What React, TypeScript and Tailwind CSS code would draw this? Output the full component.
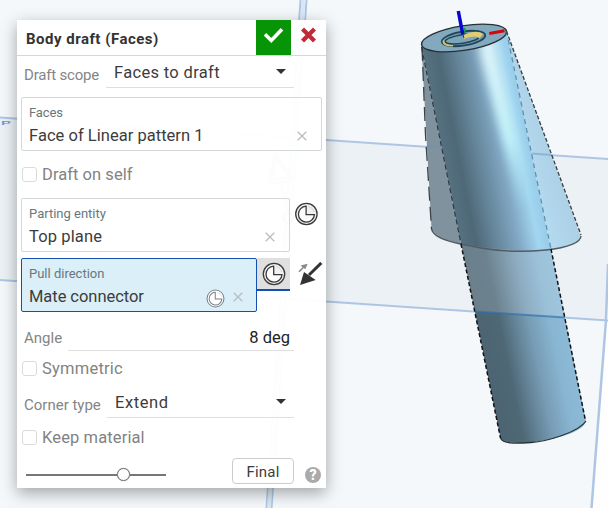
import React from "react";

function MateIcon({ className = "", light = false }: { className?: string; light?: boolean }) {
  const c = light ? "#7b8286" : "#3a3a3a";
  return (
    <svg viewBox="0 0 24 24" className={className} fill="none" stroke={c} strokeWidth={1.3}>
      <circle cx="12" cy="12" r="10.7" fill={light ? "#fff" : "#f1f1f1"} />
      <path d="M11.7 4.2A8 8 0 1 0 20 12.6H11.7Z" fill="#fff" fillOpacity={0.8} />
      <path d="M14.2 4.5A8 8 0 0 1 19.8 10" strokeWidth={0.7} stroke="#ccc" />
    </svg>
  );
}

function Clear({ className = "" }: { className?: string }) {
  return (
    <svg viewBox="0 0 10 10" className={"size-[10px] " + className} stroke="#b9bdbf" strokeWidth={1.3}>
      <path d="M.7.7 9.3 9.3M9.3.7.7 9.3" />
    </svg>
  );
}

function Caret() {
  return <span className="mr-2 h-0 w-0 border-x-[5px] border-t-[5px] border-x-transparent border-t-[#333]" />;
}

function Check({ label, className, tracking }: { label: string; className: string; tracking: string }) {
  return (
    <label className={"flex items-center pl-[5px] text-[#828282] " + className}>
      <span className="size-[15px] rounded-[3px] border border-[#d9dbdc] bg-white" />
      <span className={"ml-[5px] pt-px leading-5 " + tracking}>{label}</span>
    </label>
  );
}

function Scene() {
  return (
    <svg className="absolute inset-0" width="608" height="508" viewBox="0 0 608 508" fill="none">
      <defs>
        <linearGradient id="low" gradientUnits="userSpaceOnUse" x1="488" y1="380" x2="575" y2="362">
          <stop offset="0" stopColor="#4d6472" />
          <stop offset=".26" stopColor="#4e6876" />
          <stop offset=".58" stopColor="#779bb4" />
          <stop offset=".82" stopColor="#88b6d2" />
          <stop offset="1" stopColor="#8dbbd7" />
        </linearGradient>
        <linearGradient id="high" gradientUnits="userSpaceOnUse" x1="437" y1="127" x2="526" y2="109">
          <stop offset="0" stopColor="#567180" />
          <stop offset=".17" stopColor="#4e6877" />
          <stop offset=".4" stopColor="#67889d" />
          <stop offset=".62" stopColor="#80a6c2" />
          <stop offset=".84" stopColor="#a2d6f0" />
          <stop offset="1" stopColor="#94c9e8" />
        </linearGradient>
        <linearGradient id="shine" gradientUnits="userSpaceOnUse" x1="480" y1="45" x2="525" y2="235">
          <stop offset="0" stopColor="#dcf3fa" />
          <stop offset=".5" stopColor="#c4f4fb" />
          <stop offset=".9" stopColor="#a6ddf8" stopOpacity="0" />
        </linearGradient>
        <linearGradient id="wing" gradientUnits="userSpaceOnUse" x1="532" y1="180" x2="565" y2="170">
          <stop offset="0" stopColor="#b4daf0" />
          <stop offset="1" stopColor="#abcee2" />
        </linearGradient>
        <filter id="soft" x="-100%" y="-10%" width="300%" height="120%"><feGaussianBlur stdDeviation="5" /></filter>
        <clipPath id="upper"><path d="M421.5 46 461 244Q505 252 551 250L506.5 31Z" /></clipPath>
      </defs>
      <rect width="608" height="508" fill="#f4f8fb" />
      <path d="M0 117 608 159V265L606 320.5 0 279Z" fill="#ebf1f5" />
      <path d="M608 300 591 508H608Z" fill="#fefefe" />
      <g stroke="#aec6e4" strokeWidth="2">
        <path d="M0 117.5 326 140 608 159" />
        <path d="M0 280 326 301.5 608 320.5" />
        <path d="M608 264 606 320 591.5 508" strokeWidth="2.5" />
        <path d="M300.5 0 266.5 508M306.5 0 271.5 508" />
      </g>
      <path d="M303.5 0 269 508" stroke="#d8e6f5" strokeWidth="4" />
      <text transform="translate(1 125) scale(1.65 .62)" fill="#7898dd" className="font-['Liberation_Sans'] text-[9px] font-bold">P</text>
      <path d="M275 151 269 184 293 180ZM275 157 272 180 289 177ZM281 184 288 212" stroke="#aab4bd" strokeWidth="2" />
      <circle cx="288" cy="218" r="5" stroke="#87939d" strokeWidth="2.5" />

      <path d="M461 243 500.5 438Q509 447 546 440T586 421L551 249Z" fill="url(#low)" />
      <path d="M461 243 475.5 311.5 565 317.5 551 249Z" fill="#f0f5f8" fillOpacity=".19" />
      <path d="M475.5 311.5 565 317.5" stroke="#2e6eaa" strokeOpacity=".65" strokeWidth="2" />
      <path d="M421.5 46 431.5 229Q438 239 461 244Z" fill="#80929e" />
      <path d="M426.5 146 441 147" stroke="#6e91b2" strokeWidth="1.5" strokeOpacity=".6" />
      <path d="M506.5 31 581 237Q576 246 551 250Z" fill="url(#wing)" />
      <path d="M532 153.5 552 155" stroke="#8eb4da" strokeWidth="2" />
      <g clipPath="url(#upper)">
        <path d="M410 20H570V260H410Z" fill="url(#high)" />
        <path d="M479 30 492 30 532 205 520 205 480 55Z" fill="url(#shine)" filter="url(#soft)" />
      </g>
      <ellipse cx="464" cy="38" rx="43" ry="12.3" transform="rotate(-9 464 38)" fill="#83a9bf" stroke="#293034" strokeWidth="1.4" />
      <g transform="rotate(-9 463.5 38.5)">
        <ellipse cx="463.5" cy="38.5" rx="22" ry="7" fill="#729bb2" stroke="#234657" strokeWidth="1.8" />
        <path d="M444 37.5Q442 42 452 43.5" stroke="#dcc66c" strokeWidth="2.6" />
        <ellipse cx="462.5" cy="38.8" rx="17.5" ry="4.3" fill="#7ca6bc" stroke="#244456" strokeWidth="1.6" />
        <path d="M464 35Q478 31.5 483.5 37L479.5 41Q477 36.5 464 39Z" fill="#e2cc71" />
      </g>
      <path d="M462 35 465 28V33Z" stroke="#159943" strokeWidth="1.2" />
      <path d="M463 35 464 38" stroke="#293d48" />
      <path d="M458.3 11 462.8 34.5" stroke="#0707ce" strokeWidth="3.5" />
      <path d="M489.3 33.4 504.5 30.8" stroke="#d0080e" strokeWidth="3" />
      <path d="M431.5 229C434 240 461 244.5 481 248S523 252.3 546 250 581 242 581 236" stroke="#505b62" strokeWidth="1.4" />
      <path d="M500.5 438C503 444 515 443.5 531 442.5S579 432 586 421" stroke="#2b3438" strokeWidth="1.3" />
      <path d="M422 47 425.5 135 431.5 229" stroke="#39444a" strokeWidth="1.3" strokeDasharray="14 6" />
      <path d="M506.5 31 581 235" stroke="#333d43" strokeWidth="1.3" strokeDasharray="4 2" />
      <path d="M421.5 47 461 244" stroke="#29363e" strokeWidth="1.1" strokeDasharray="5 3" />
      <path d="M506.5 31 551 249" stroke="#37617e" strokeOpacity=".65" strokeWidth="1.2" strokeDasharray="5 4" />
      <path d="M461 244 500.5 438M551 249 585.5 421" stroke="#111" strokeWidth="1.5" strokeDasharray="4 2.5" />
    </svg>
  );
}

export default function App() {
  return (
    <main className="relative h-[508px] w-[608px] overflow-hidden pt-5 pl-[17px] font-[Roboto,sans-serif] text-[16.5px] text-[#3c3c3c]">
      <Scene />
      <section className="relative flex h-[468px] w-[309px] flex-col bg-white/96 shadow-[0_5px_15px_rgba(0,0,0,0.34)]">
        <header className="flex h-9 shrink-0 border-b border-[#d5d8d9] bg-white">
          <h1 className="grow pt-[9px] pl-[9px] text-[15px] leading-5 font-bold tracking-[0.5px] text-[#333]">Body draft (Faces)</h1>
          <button className="flex h-[35px] w-[35px] items-start justify-center bg-[#079407] pt-[7px]">
            <svg width="21" height="17" viewBox="0 0 21 17" fill="none" stroke="#fff" strokeWidth="3.6"><path d="M2 7.3 8.3 13.5 19 2.3" /></svg>
          </button>
          <button className="flex h-[35px] w-[35px] items-start pt-[7px] pl-[10px]">
            <svg width="15" height="16" viewBox="0 0 15 16" fill="none" stroke="#c02b38" strokeWidth="4.3"><path d="M1.5 2 13.5 14M13.5 2 1.5 14" /></svg>
          </button>
        </header>
        <div className="flex h-8 shrink-0 pl-[7px]">
          <span className="w-[82px] pt-[9px] text-[15px] leading-5 tracking-[-0.2px] text-[#858585]">Draft scope</span>
          <div className="flex w-[188px] items-center justify-between border-b border-[#dedfe0] pl-2"><span className="pt-0.5 leading-6 tracking-[0.33px]">Faces to draft</span><Caret /></div>
        </div>
        <div className="mt-[9px] ml-1 flex h-[54px] w-[301px] shrink-0 flex-col rounded-[2px] border border-[#d5d8d9] bg-white/40 pt-[5px] pl-[7px]">
          <span className="text-[13px] leading-5 tracking-[-0.15px] text-[#69767d]">Faces</span>
          <div className="flex h-[26px] items-center"><span className="grow leading-6 tracking-[0.03px]">Face of Linear pattern 1</span><Clear className="mr-[14px]" /></div>
        </div>
        <Check label="Draft on self" className="h-[47px] shrink-0" tracking="tracking-[0.05px]" />
        <div className="flex h-[54px] shrink-0 pl-1">
          <div className="flex w-[269px] flex-col rounded-[2px] border border-[#d5d8d9] pt-[5px] pl-[7px]">
            <span className="text-[13px] leading-5 text-[#69767d]">Parting entity</span>
            <div className="flex h-[26px] items-center"><span className="grow leading-6 tracking-[0.13px]">Top plane</span><Clear className="mr-[14px]" /></div>
          </div>
          <MateIcon className="mt-1 ml-[5px] size-6 -translate-x-[0.6px]" />
        </div>
        <div className="mt-1.5 flex h-[54px] shrink-0 pl-1">
          <div className="flex w-[236px] flex-col rounded-[2px] border border-[#1350b1] bg-[#daeff8] pt-[5px] pl-[7px]">
            <span className="text-[13px] leading-5 text-[#69767d]">Pull direction</span>
            <div className="flex h-[26px] items-center"><span className="grow leading-6 tracking-[-0.05px]">Mate connector</span><MateIcon light className="mr-2 size-[19px] translate-y-px" /><Clear className="mr-[13px]" /></div>
          </div>
          <div className="flex h-[33px] w-[33px] items-center justify-center border-b-2 border-[#1350b1] bg-[#e0e0e0]"><MateIcon className="size-6" /></div>
          <svg className="mt-1 ml-[8px]" width="25" height="25" viewBox="0 0 25 25">
            <path d="M23.3 .9 11 13" stroke="#333" strokeWidth="3" />
            <path d="M2 23 6 10 17.7 18Z" fill="#333" />
            <path d="M1 9.8 6 4.8" stroke="#888" strokeWidth="1.6" />
            <path d="M9.7 1.7 2.5 3.6 7.3 7.3Z" fill="#888" />
          </svg>
        </div>
        <div className="flex h-[39px] shrink-0 pl-[7px]">
          <span className="w-[44px] pt-4 text-[15px] leading-5 text-[#858585]">Angle</span>
          <div className="flex w-[226px] justify-end border-b border-[#dedfe0] pt-4 pr-1 leading-5 text-[#222]">8 deg</div>
        </div>
        <Check label="Symmetric" className="h-[35px] shrink-0" tracking="tracking-[0.22px]" />
        <div className="flex h-8 shrink-0 pl-[7px]">
          <span className="w-[83px] pt-[9px] text-[15px] leading-5 text-[#858585]">Corner type</span>
          <div className="flex w-[187px] items-center justify-between border-b border-[#dedfe0] pl-2"><span className="pt-0.5 leading-6 tracking-[0.6px]">Extend</span><Caret /></div>
        </div>
        <Check label="Keep material" className="h-[39px] shrink-0" tracking="tracking-[0.12px]" />
        <footer className="flex h-[31px] shrink-0 pl-[9px]">
          <div className="flex h-[35px] w-[140px] items-center">
            <span className="h-0.5 w-[91px] bg-[#777]" />
            <span className="size-[13px] rounded-full border border-[#777] bg-white shadow-[0_0_1px_#777]" />
            <span className="h-0.5 grow bg-[#777]" />
          </div>
          <button className="mt-px ml-[66px] flex h-[26px] w-[62px] justify-center rounded border border-[#cacccd] bg-white pt-px text-[15px] leading-6 tracking-[0.2px]">Final</button>
          <span className="mt-[10px] ml-[11px] flex size-4 items-center justify-center rounded-full bg-[#aaa] text-[14px] leading-4 font-black text-white">?</span>
        </footer>
      </section>
    </main>
  );
}
